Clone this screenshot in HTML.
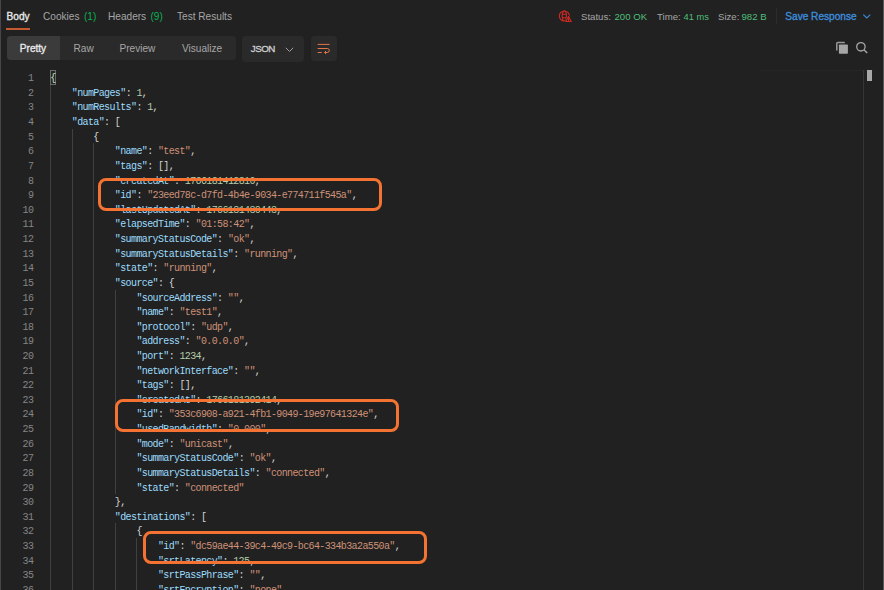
<!DOCTYPE html>
<html><head><meta charset="utf-8">
<style>
html,body{margin:0;padding:0;}
body{width:884px;height:590px;overflow:hidden;background:#212121;position:relative;font-family:"Liberation Sans",sans-serif;}
.a{position:absolute;white-space:pre;}
.ui{position:absolute;white-space:pre;font-size:10.1px;line-height:12px;color:#a6a6a6;}
.g1{color:#0cb052;}
.g2{color:#4fbf7a;}
.bl{left:0;top:0;width:1px;height:590px;background:#474747;position:absolute;}
.br{left:883px;top:0;width:1px;height:590px;background:#5a5a5a;position:absolute;}
.seg{position:absolute;left:7px;top:36px;width:229px;height:24px;background:#2a2a2a;border-radius:4px;}
.segsel{position:absolute;left:7px;top:36px;width:53px;height:24px;background:#3b3b3b;border-radius:4px 0 0 4px;}
.box{position:absolute;background:#2a2a2a;border-radius:4px;}
.ln{position:absolute;left:0;width:33.3px;text-align:right;font-family:"Liberation Mono",monospace;font-size:10.000px;letter-spacing:-0.620px;line-height:14.62px;height:14.62px;color:#858585;white-space:pre;}
.cl{position:absolute;font-family:"Liberation Mono",monospace;font-size:10.000px;letter-spacing:-0.620px;line-height:14.62px;height:14.62px;white-space:pre;color:#d4d4d4;}
.k{color:#9cdcfe;}.s{color:#ce9178;}.n{color:#b5cea8;}.p{color:#d4d4d4;}
.ig{position:absolute;width:1px;background:#404040;}
.ob{position:absolute;border:3.4px solid #f47333;border-radius:8px;box-sizing:border-box;}
</style></head><body>
<div class="bl"></div><div class="br"></div>

<!-- tabs -->
<div class="ui" style="left:6.6px;top:11px;color:#e8e8e8;-webkit-text-stroke:0.35px #e8e8e8;">Body</div>
<div class="a" style="left:6px;top:28px;width:24px;height:1.6px;background:#c35a30;"></div>
<div class="ui" style="left:43px;top:11px;">Cookies</div><div class="ui g1" style="left:84px;top:11px;">(1)</div>
<div class="ui" style="left:108px;top:11px;">Headers</div><div class="ui g1" style="left:150.5px;top:11px;">(9)</div>
<div class="ui" style="left:177px;top:11px;">Test Results</div>

<!-- status -->
<svg class="a" style="left:557px;top:9px" width="16" height="14" viewBox="0 0 16 14">
  <g fill="none" stroke="#d22a24" stroke-width="1.1">
    <circle cx="7.3" cy="7" r="5.0"/>
    <ellipse cx="7.3" cy="7" rx="2.1" ry="5.0"/>
    <path d="M5.2 5.3H9.4M5.2 8.8H9.4"/>
  </g>
  <path d="M11.5 5.6L16.4 14H6.6Z" fill="#212121"/>
  <path d="M11.5 7.4L14.3 12.5H8.7Z" fill="none" stroke="#d22a24" stroke-width="1.1" stroke-linejoin="round"/>
  <path d="M11.5 9.2V12.4" stroke="#d22a24" stroke-width="1"/>
</svg>
<div class="ui" style="left:581px;top:10.5px;font-size:9.6px;">Status:</div><div class="ui g2" style="left:614.5px;top:10.5px;font-size:9.6px;">200 OK</div>
<div class="ui" style="left:657px;top:10.5px;font-size:9.6px;">Time:</div><div class="ui g2" style="left:683.5px;top:10.5px;font-size:9.3px;">41 ms</div>
<div class="ui" style="left:718px;top:10.5px;font-size:9.6px;">Size:</div><div class="ui g2" style="left:741.5px;top:10.5px;font-size:9.6px;">982 B</div>
<div class="a" style="left:776px;top:8px;width:1px;height:16px;background:#2c2c2c;"></div>
<div class="ui" style="left:785.3px;top:11px;font-size:10.1px;color:#3d8cdc;-webkit-text-stroke:0.35px #3d8cdc;">Save Response</div>
<svg class="a" style="left:862px;top:12px" width="10" height="8" viewBox="0 0 10 8"><path d="M1.3 2.6L4.8 6L8.3 2.6" fill="none" stroke="#3d8cdc" stroke-width="1.1"/></svg>

<!-- toolbar -->
<div class="seg"></div>
<div class="segsel"></div>
<div class="ui" style="left:19.8px;top:43px;color:#e8e8e8;-webkit-text-stroke:0.35px #e8e8e8;">Pretty</div>
<div class="ui" style="left:73.5px;top:43px;">Raw</div>
<div class="ui" style="left:119.5px;top:43px;">Preview</div>
<div class="ui" style="left:182px;top:43px;">Visualize</div>
<div class="box" style="left:242px;top:35.7px;width:62px;height:26px;"></div>
<div class="ui" style="left:250.8px;top:42.8px;font-size:9.8px;letter-spacing:-0.55px;color:#cfcfcf;-webkit-text-stroke:0.3px #cfcfcf;">JSON</div>
<svg class="a" style="left:284px;top:44.5px" width="11" height="9" viewBox="0 0 11 9"><path d="M1.8 2.8L5.5 6.5L9.2 2.8" fill="none" stroke="#a0a0a0" stroke-width="1"/></svg>
<div class="box" style="left:310.6px;top:35.8px;width:26.2px;height:25.7px;"></div>
<svg class="a" style="left:315px;top:40px" width="18" height="17" viewBox="0 0 18 17">
  <g fill="none" stroke="#e0764a" stroke-width="1.0">
    <path d="M2.7 4.4H14.6"/>
    <path d="M2.7 8.5H12.3A2 2 0 0 1 12.3 12.5H9.6"/>
    <path d="M11.1 10.9L9.5 12.5L11.1 14.1"/>
    <path d="M2.7 12.5H6.8"/>
  </g>
</svg>

<!-- copy / search -->
<svg class="a" style="left:834px;top:40px" width="16" height="16" viewBox="0 0 16 16">
  <path d="M2.8 10.6V3.4C2.8 2.8 3.2 2.5 3.7 2.5H10.8" fill="none" stroke="#9a9a9a" stroke-width="1.5"/>
  <rect x="4.9" y="4.4" width="9" height="9.3" rx="0.8" fill="#a6a6a6"/>
</svg>
<svg class="a" style="left:854px;top:40px" width="16" height="16" viewBox="0 0 16 16">
  <circle cx="6.9" cy="6.8" r="4.2" fill="none" stroke="#a6a6a6" stroke-width="1.3"/>
  <path d="M9.9 9.8L13.2 13.1" stroke="#a6a6a6" stroke-width="1.4"/>
</svg>

<!-- code area -->
<div class="a" style="left:760px;top:70px;width:115px;height:1px;background:#252525;"></div>
<div class="a" style="left:863px;top:70px;width:1px;height:520px;background:#363636;"></div>
<div class="a" style="left:867px;top:70px;width:4.5px;height:11.4px;background:#a8a8a8;"></div>
<div class="a" style="left:50px;top:70.2px;width:6px;height:14.6px;box-sizing:border-box;border:1px solid #6a6a6a;background:#1b2a1b;"></div>
<div class="ig" style="left:50.30px;top:84.82px;height:511.70px"></div>
<div class="ig" style="left:71.82px;top:128.68px;height:467.84px"></div>
<div class="ig" style="left:93.34px;top:143.30px;height:453.22px"></div>
<div class="ig" style="left:114.86px;top:289.50px;height:204.68px"></div>
<div class="ig" style="left:114.86px;top:523.42px;height:73.10px"></div>
<div class="ig" style="left:136.38px;top:538.04px;height:58.48px"></div>
<div class="ln" style="top:72.20px">1</div>
<div class="cl" style="top:72.20px;left:50.30px"><span class="p">{</span></div>
<div class="ln" style="top:86.82px">2</div>
<div class="cl" style="top:86.82px;left:71.82px"><span class="k">&quot;numPages&quot;</span><span class="p">: </span><span class="n">1</span><span class="p">,</span></div>
<div class="ln" style="top:101.44px">3</div>
<div class="cl" style="top:101.44px;left:71.82px"><span class="k">&quot;numResults&quot;</span><span class="p">: </span><span class="n">1</span><span class="p">,</span></div>
<div class="ln" style="top:116.06px">4</div>
<div class="cl" style="top:116.06px;left:71.82px"><span class="k">&quot;data&quot;</span><span class="p">: [</span></div>
<div class="ln" style="top:130.68px">5</div>
<div class="cl" style="top:130.68px;left:93.34px"><span class="p">{</span></div>
<div class="ln" style="top:145.30px">6</div>
<div class="cl" style="top:145.30px;left:114.86px"><span class="k">&quot;name&quot;</span><span class="p">: </span><span class="s">&quot;test&quot;</span><span class="p">,</span></div>
<div class="ln" style="top:159.92px">7</div>
<div class="cl" style="top:159.92px;left:114.86px"><span class="k">&quot;tags&quot;</span><span class="p">: [],</span></div>
<div class="ln" style="top:174.54px">8</div>
<div class="cl" style="top:174.54px;left:114.86px"><span class="k">&quot;createdAt&quot;</span><span class="p">: </span><span class="n">1766181412810</span><span class="p">,</span></div>
<div class="ln" style="top:189.16px">9</div>
<div class="cl" style="top:189.16px;left:114.86px"><span class="k">&quot;id&quot;</span><span class="p">: </span><span class="s">&quot;23eed78c-d7fd-4b4e-9034-e774711f545a&quot;</span><span class="p">,</span></div>
<div class="ln" style="top:203.78px">10</div>
<div class="cl" style="top:203.78px;left:114.86px"><span class="k">&quot;lastUpdatedAt&quot;</span><span class="p">: </span><span class="n">1766181430443</span><span class="p">,</span></div>
<div class="ln" style="top:218.40px">11</div>
<div class="cl" style="top:218.40px;left:114.86px"><span class="k">&quot;elapsedTime&quot;</span><span class="p">: </span><span class="s">&quot;01:58:42&quot;</span><span class="p">,</span></div>
<div class="ln" style="top:233.02px">12</div>
<div class="cl" style="top:233.02px;left:114.86px"><span class="k">&quot;summaryStatusCode&quot;</span><span class="p">: </span><span class="s">&quot;ok&quot;</span><span class="p">,</span></div>
<div class="ln" style="top:247.64px">13</div>
<div class="cl" style="top:247.64px;left:114.86px"><span class="k">&quot;summaryStatusDetails&quot;</span><span class="p">: </span><span class="s">&quot;running&quot;</span><span class="p">,</span></div>
<div class="ln" style="top:262.26px">14</div>
<div class="cl" style="top:262.26px;left:114.86px"><span class="k">&quot;state&quot;</span><span class="p">: </span><span class="s">&quot;running&quot;</span><span class="p">,</span></div>
<div class="ln" style="top:276.88px">15</div>
<div class="cl" style="top:276.88px;left:114.86px"><span class="k">&quot;source&quot;</span><span class="p">: {</span></div>
<div class="ln" style="top:291.50px">16</div>
<div class="cl" style="top:291.50px;left:136.38px"><span class="k">&quot;sourceAddress&quot;</span><span class="p">: </span><span class="s">&quot;&quot;</span><span class="p">,</span></div>
<div class="ln" style="top:306.12px">17</div>
<div class="cl" style="top:306.12px;left:136.38px"><span class="k">&quot;name&quot;</span><span class="p">: </span><span class="s">&quot;test1&quot;</span><span class="p">,</span></div>
<div class="ln" style="top:320.74px">18</div>
<div class="cl" style="top:320.74px;left:136.38px"><span class="k">&quot;protocol&quot;</span><span class="p">: </span><span class="s">&quot;udp&quot;</span><span class="p">,</span></div>
<div class="ln" style="top:335.36px">19</div>
<div class="cl" style="top:335.36px;left:136.38px"><span class="k">&quot;address&quot;</span><span class="p">: </span><span class="s">&quot;0.0.0.0&quot;</span><span class="p">,</span></div>
<div class="ln" style="top:349.98px">20</div>
<div class="cl" style="top:349.98px;left:136.38px"><span class="k">&quot;port&quot;</span><span class="p">: </span><span class="n">1234</span><span class="p">,</span></div>
<div class="ln" style="top:364.60px">21</div>
<div class="cl" style="top:364.60px;left:136.38px"><span class="k">&quot;networkInterface&quot;</span><span class="p">: </span><span class="s">&quot;&quot;</span><span class="p">,</span></div>
<div class="ln" style="top:379.22px">22</div>
<div class="cl" style="top:379.22px;left:136.38px"><span class="k">&quot;tags&quot;</span><span class="p">: [],</span></div>
<div class="ln" style="top:393.84px">23</div>
<div class="cl" style="top:393.84px;left:136.38px"><span class="k">&quot;createdAt&quot;</span><span class="p">: </span><span class="n">1766181392414</span><span class="p">,</span></div>
<div class="ln" style="top:408.46px">24</div>
<div class="cl" style="top:408.46px;left:136.38px"><span class="k">&quot;id&quot;</span><span class="p">: </span><span class="s">&quot;353c6908-a921-4fb1-9049-19e97641324e&quot;</span><span class="p">,</span></div>
<div class="ln" style="top:423.08px">25</div>
<div class="cl" style="top:423.08px;left:136.38px"><span class="k">&quot;usedBandwidth&quot;</span><span class="p">: </span><span class="s">&quot;0.000&quot;</span><span class="p">,</span></div>
<div class="ln" style="top:437.70px">26</div>
<div class="cl" style="top:437.70px;left:136.38px"><span class="k">&quot;mode&quot;</span><span class="p">: </span><span class="s">&quot;unicast&quot;</span><span class="p">,</span></div>
<div class="ln" style="top:452.32px">27</div>
<div class="cl" style="top:452.32px;left:136.38px"><span class="k">&quot;summaryStatusCode&quot;</span><span class="p">: </span><span class="s">&quot;ok&quot;</span><span class="p">,</span></div>
<div class="ln" style="top:466.94px">28</div>
<div class="cl" style="top:466.94px;left:136.38px"><span class="k">&quot;summaryStatusDetails&quot;</span><span class="p">: </span><span class="s">&quot;connected&quot;</span><span class="p">,</span></div>
<div class="ln" style="top:481.56px">29</div>
<div class="cl" style="top:481.56px;left:136.38px"><span class="k">&quot;state&quot;</span><span class="p">: </span><span class="s">&quot;connected&quot;</span></div>
<div class="ln" style="top:496.18px">30</div>
<div class="cl" style="top:496.18px;left:114.86px"><span class="p">},</span></div>
<div class="ln" style="top:510.80px">31</div>
<div class="cl" style="top:510.80px;left:114.86px"><span class="k">&quot;destinations&quot;</span><span class="p">: [</span></div>
<div class="ln" style="top:525.42px">32</div>
<div class="cl" style="top:525.42px;left:136.38px"><span class="p">{</span></div>
<div class="ln" style="top:540.04px">33</div>
<div class="cl" style="top:540.04px;left:157.90px"><span class="k">&quot;id&quot;</span><span class="p">: </span><span class="s">&quot;dc59ae44-39c4-49c9-bc64-334b3a2a550a&quot;</span><span class="p">,</span></div>
<div class="ln" style="top:554.66px">34</div>
<div class="cl" style="top:554.66px;left:157.90px"><span class="k">&quot;srtLatency&quot;</span><span class="p">: </span><span class="n">125</span><span class="p">,</span></div>
<div class="ln" style="top:569.28px">35</div>
<div class="cl" style="top:569.28px;left:157.90px"><span class="k">&quot;srtPassPhrase&quot;</span><span class="p">: </span><span class="s">&quot;&quot;</span><span class="p">,</span></div>
<div class="ln" style="top:583.90px">36</div>
<div class="cl" style="top:583.90px;left:157.90px"><span class="k">&quot;srtEncryption&quot;</span><span class="p">: </span><span class="s">&quot;none&quot;</span><span class="p">,</span></div>

<div class="ob" style="left:98px;top:178px;width:284px;height:33px;"></div>
<div class="ob" style="left:115.3px;top:399px;width:284px;height:33px;"></div>
<div class="ob" style="left:143px;top:531px;width:284px;height:33px;"></div>
</body></html>
